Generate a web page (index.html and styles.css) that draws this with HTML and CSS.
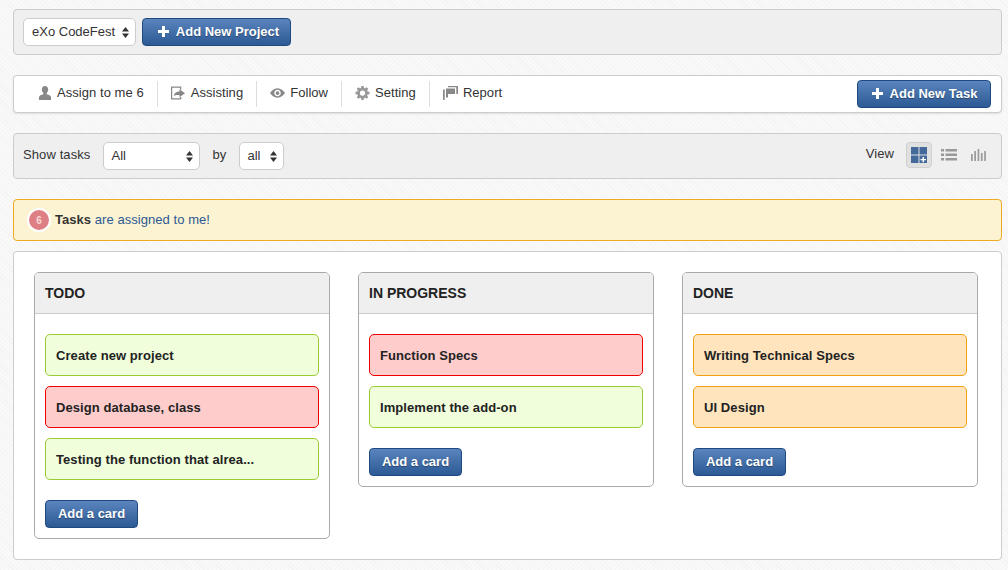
FILE: index.html
```html
<!DOCTYPE html>
<html lang="en">
<head>
<meta charset="utf-8">
<title>Tasks</title>
<link rel="stylesheet" href="styles.css">
</head>
<body>
<div class="page">
  <div class="bar bar-project">
    <div class="select select-project"><span class="select-text">eXo CodeFest</span><svg class="updown" viewBox="0 0 7 11"><path d="M3.500 0L7 4.500H0zM3.500 11L0 6.500H7z"/></svg></div>
    <button class="btn btn-icon btn-project"><svg class="plus" viewBox="0 0 11 11"><path d="M4 0h3v4h4v3H7v4H4V7H0V4h4z"/></svg>Add New Project</button>
  </div>

  <div class="nav">
    <ul class="tabs">
      <li class="tab"><svg class="ico" viewBox="0 0 14 14"><path d="M7 0c2 0 3.200 1.500 3.200 3.600 0 1.500-.7 2.800-1.500 3.500v1.200c2 .5 4.300 1.300 4.300 3V14H1v-2.700c0-1.700 2.300-2.500 4.300-3V7.100C4.500 6.400 3.800 5.100 3.800 3.600 3.800 1.500 5 0 7 0z"/></svg>Assign to me 6</li>
      <li class="tab"><svg class="ico ico-w" viewBox="0 0 16 14"><path d="M0 0h11v3.500H9.700V1.300H1.300v11.400h8.400v-1.500H11V14H0z"/><path d="M3 10c.4-3 2.500-4.500 6-4.600V3l6 4.300-6 4.200V9c-2.500 0-4.500 0-6 1z"/></svg>Assisting</li>
      <li class="tab"><svg class="ico ico-w" viewBox="0 0 16 12"><path fill-rule="evenodd" d="M8 1c3.500 0 6.300 2.400 8 5-1.700 2.600-4.500 5-8 5S1.700 8.600 0 6c1.700-2.600 4.500-5 8-5zm0 1.500C6 2.500 4.500 4 4.500 6S6 9.500 8 9.500 11.500 8 11.500 6 10 2.500 8 2.500zM8 4a2 2 0 110 4 2 2 0 010-4z"/></svg>Follow</li>
      <li class="tab"><svg class="ico ico-w ico-light" viewBox="0 0 16 16"><path fill-rule="evenodd" d="M6.700 0h2.600l.4 2.200 1.300.5L12.800 1.400l1.800 1.800-1.300 1.800.5 1.300 2.200.4v2.600l-2.200.4-.5 1.300 1.300 1.800-1.800 1.800-1.800-1.300-1.300.5-.4 2.200H6.700l-.4-2.200-1.300-.5-1.800 1.300-1.800-1.800 1.300-1.800-.5-1.300L0 9.300V6.700l2.200-.4.500-1.300L1.400 3.200l1.800-1.800L5 2.700l1.300-.5zM8 5a3 3 0 100 6 3 3 0 000-6z"/></svg>Setting</li>
      <li class="tab"><svg class="ico ico-w" viewBox="0 0 15 14"><path d="M0 3.500h1.700V14H0zM5 0h10v1.300H5zM3 2.500h9V8H5v3.500H3zM13.300 1.300H15V8h-1.700z"/></svg>Report</li>
    </ul>
    <button class="btn btn-icon btn-task"><svg class="plus" viewBox="0 0 11 11"><path d="M4 0h3v4h4v3H7v4H4V7H0V4h4z"/></svg>Add New Task</button>
  </div>

  <div class="bar bar-filter">
    <span class="label">Show tasks</span>
    <div class="select select-all"><span class="select-text">All</span><svg class="updown" viewBox="0 0 7 11"><path d="M3.500 0L7 4.500H0zM3.500 11L0 6.500H7z"/></svg></div>
    <span class="label label-by">by</span>
    <div class="select select-by"><span class="select-text">all</span><svg class="updown" viewBox="0 0 7 11"><path d="M3.500 0L7 4.500H0zM3.500 11L0 6.500H7z"/></svg></div>
    <span class="label label-view">View</span>
    <div class="views">
      <span class="view active"><svg viewBox="0 0 16 16"><path class="blue" d="M0 0h7.500v7.500H0zM8.500 0H16v7.500H8.500zM0 8.500h7.500V16H0zM8.500 8.500H16V16H8.500z"/><path class="white" d="M11.500 10h1.500v2h2v1.300h-2v2h-1.500v-2h-2V12h2z"/></svg></span>
      <span class="view"><svg viewBox="0 0 16 12"><path class="grey" d="M0 0h3v2.500H0zM4.500 0H16v2.500H4.500zM0 4.500h3V7H0zM4.500 4.500H16V7H4.500zM0 9h3v2.500H0zM4.500 9H16v2.500H4.500z"/></svg></span>
      <span class="view"><svg viewBox="0 0 16 12"><path class="grey" d="M0 5h1.700v7H0zM3.300 2h1.700v10H3.300zM6.600 0h1.700v12H6.600zM9.900 4h1.700v8H9.900zM13.200 2h1.700v10h-1.700z"/></svg></span>
    </div>
  </div>

  <div class="alert"><span class="badge">6</span><b>Tasks</b>&nbsp;<span class="alert-text">are assigned to me!</span></div>

  <div class="board">
    <section class="column">
      <h2 class="column-title">TODO</h2>
      <div class="cards">
        <div class="card green">Create new project</div>
        <div class="card red">Design database, class</div>
        <div class="card green">Testing the function that alrea...</div>
        <button class="btn btn-card">Add a card</button>
      </div>
    </section>
    <section class="column">
      <h2 class="column-title">IN PROGRESS</h2>
      <div class="cards">
        <div class="card red">Function Specs</div>
        <div class="card green">Implement the add-on</div>
        <button class="btn btn-card">Add a card</button>
      </div>
    </section>
    <section class="column">
      <h2 class="column-title">DONE</h2>
      <div class="cards">
        <div class="card orange">Writing Technical Specs</div>
        <div class="card orange">UI Design</div>
        <button class="btn btn-card">Add a card</button>
      </div>
    </section>
  </div>
</div>
</body>
</html>
```
FILE: styles.css
```css
* { box-sizing: border-box; }
html, body { margin: 0; height: 100%; }
body {
  background-color: #f7f7f7;
  background-image: repeating-linear-gradient(45deg, #f4f4f4 0 1px, #f9f9f9 1px 3px);
  font-family: "Liberation Sans", Arial, sans-serif;
  font-size: 13px;
  color: #333;
  overflow: hidden;
}
.page { padding: 9px 6px 0 13px; display: flex; flex-direction: column; }
.bar {
  display: flex;
  align-items: center;
  height: 46px;
  padding: 0 9px;
  background: #efefef;
  border: 1px solid #ccc;
  border-radius: 4px;
}
.select {
  display: flex;
  align-items: center;
  justify-content: space-between;
  height: 28px;
  background: #fff;
  border: 1px solid #ccc;
  border-radius: 5px;
  color: #333;
  font-size: 13px;
  padding: 0 6px 0 8px;
}
.select-text { padding-bottom: 2px; }
.select-project { width: 113px; }
.select-all { width: 97px; margin-left: 13px; padding-left: 7px; }
.select-by { width: 45px; margin-left: 13px; padding-left: 7px; }
.updown { width: 7px; height: 11px; fill: #333; flex: none; }
.btn {
  height: 28px;
  border: 1px solid #1f4a80;
  border-radius: 4px;
  background: linear-gradient(#5a84bd, #2c5a94);
  color: #fff;
  font: bold 13px "Liberation Sans", Arial, sans-serif;
  text-shadow: 0 1px 1px rgba(0,0,0,.35);
  padding: 0 0 2px;
  flex: none;
}
.btn-icon { display: flex; align-items: center; justify-content: center; width: 149px; margin-left: 6px; padding-left: 1px; }
.btn-project { padding-left: 4px; }
.plus { width: 11px; height: 11px; fill: #fff; margin-right: 7px; }
.btn-task { width: 134px; margin-left: auto; }
.nav {
  display: flex;
  align-items: center;
  height: 38px;
  margin-top: 20px;
  padding: 0 10px 0 14px;
  background: #fff;
  border: 1px solid #ccc;
  border-radius: 4px;
  box-shadow: 0 1px 2px rgba(0,0,0,.1);
}
.tabs { display: flex; list-style: none; margin: 0; padding: 0; }
.tab {
  display: flex;
  align-items: flex-start;
  height: 26px;
  padding: 0 13px;
  border-left: 1px solid #ddd;
  color: #333;
  white-space: nowrap;
  line-height: 24px;
  letter-spacing: .05px;
}
.tab:first-child { border-left: 0; padding-left: 10px; }
.ico { width: 14px; height: 14px; margin: 5px 5px 0 0; fill: #888; flex: none; }
.ico-w { width: 15px; }
.ico-light { fill: #999; }
.bar-filter { margin-top: 20px; }
.label { color: #333; padding-bottom: 4px; letter-spacing: .1px; }
.label-by { margin-left: 12px; }
.label-view { margin-left: auto; margin-right: 12px; padding-bottom: 5px; }
.views { display: flex; align-items: center; margin-bottom: 2px; }
.view {
  display: flex;
  align-items: center;
  justify-content: center;
  width: 26px;
  height: 26px;
  margin-left: 4px;
  border: 1px solid transparent;
  border-radius: 4px;
}
.view:first-child { margin-left: 0; }
.view svg { width: 16px; height: 16px; }
.view.active { background: #e0e0e0; border-color: #d0d0d0; }
.blue { fill: #44699b; }
.white { fill: #fff; }
.grey { fill: #9a9a9a; }
.alert {
  display: flex;
  align-items: center;
  height: 42px;
  margin-top: 20px;
  padding: 0 0 2px 14px;
  background: #fcf3d2;
  border: 1px solid #eeaa20;
  border-radius: 4px;
  color: #333;
  letter-spacing: .05px;
}
.badge {
  display: flex;
  align-items: center;
  justify-content: center;
  width: 24px;
  height: 24px;
  margin: 2px 4px 0 -1px;
  border: 2px solid #fff;
  border-radius: 50%;
  background: #de7f85;
  color: #f8d8d8;
  font-size: 10px;
  font-weight: bold;
}
.alert-text { color: #2c5a94; }
.board {
  display: flex;
  gap: 28px;
  align-items: flex-start;
  height: 309px;
  margin-top: 10px;
  padding: 20px 20px 0;
  background: #fff;
  border: 1px solid #ccc;
  border-radius: 4px;
}
.column {
  flex: 0 0 296px;
  border: 1px solid #aaa;
  border-radius: 5px;
  background: #fff;
  overflow: hidden;
}
.column-title {
  margin: 0;
  height: 41px;
  padding: 0 10px;
  background: #efefef;
  border-bottom: 1px solid #ccc;
  color: #222;
  font-size: 14px;
  font-weight: bold;
  line-height: 40px;
}
.cards { display: flex; flex-direction: column; gap: 10px; padding: 20px 10px 10px; }
.card {
  height: 42px;
  padding: 0 10px;
  border: 1px solid;
  border-radius: 5px;
  color: #222;
  font-size: 13px;
  font-weight: bold;
  line-height: 41px;
  letter-spacing: .08px;
  white-space: nowrap;
}
.green { background: #f0fedb; border-color: #99cc33; }
.red { background: #ffcccc; border-color: #ee0000; }
.orange { background: #ffe4bd; border-color: #f0a010; }
.btn-card { width: 93px; margin-top: 10px; }
```
